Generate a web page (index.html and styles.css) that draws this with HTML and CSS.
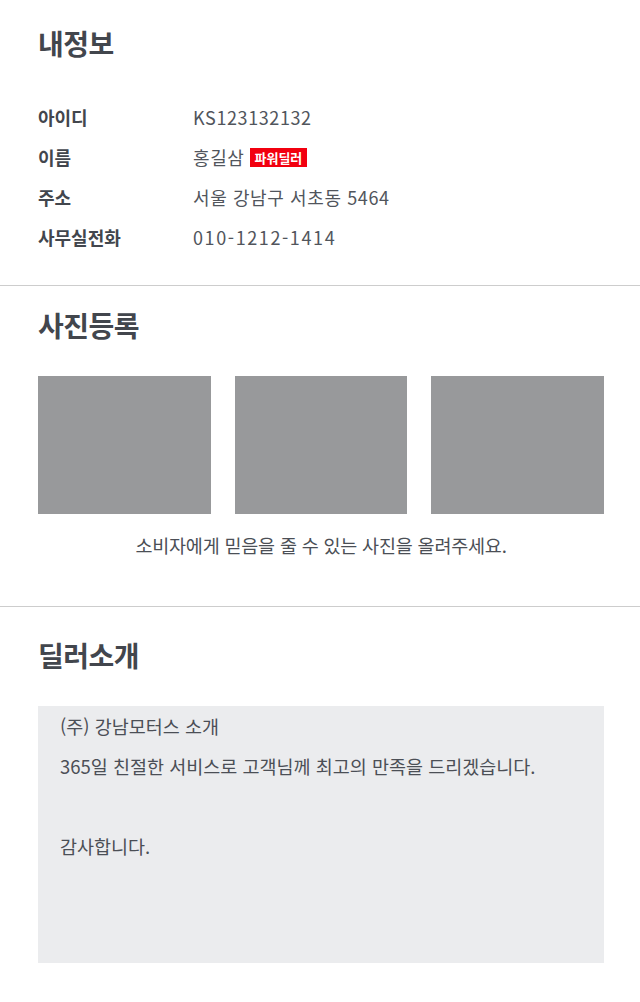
FILE: index.html
```html
<!DOCTYPE html>
<html lang="ko">
<head>
  <meta charset="UTF-8" />
  <meta name="viewport" content="width=device-width, initial-scale=1.0" />
  <title>내정보</title>
  <link rel="stylesheet" href="styles.css">
</head>
<body>
  <section class="section info">
    <h2 class="title">내정보</h2>
    <dl class="rows">
      <div class="row">
        <dt>아이디</dt>
        <dd>KS123132132</dd>
      </div>
      <div class="row">
        <dt>이름</dt>
        <dd>홍길삼 <span class="badge">파워딜러</span></dd>
      </div>
      <div class="row">
        <dt>주소</dt>
        <dd>서울 강남구 서초동 5464</dd>
      </div>
      <div class="row">
        <dt>사무실전화</dt>
        <dd class="phone">010-1212-1414</dd>
      </div>
    </dl>
  </section>

  <section class="section photos">
    <h2 class="title">사진등록</h2>
    <div class="photo-grid">
      <div class="photo"></div>
      <div class="photo"></div>
      <div class="photo"></div>
    </div>
    <p class="caption">소비자에게 믿음을 줄 수 있는 사진을 올려주세요.</p>
  </section>

  <section class="section dealer">
    <h2 class="title">딜러소개</h2>
    <div class="intro-box">(주) 강남모터스 소개
365일 친절한 서비스로 고객님께 최고의 만족을 드리겠습니다.

감사합니다.</div>
  </section>
</body>
</html>
```

FILE: styles.css
```css
body {
  margin: 0;
  background: #fff;
  color: #4b4f56;
  font-family: "Noto Sans CJK KR", "Noto Sans", sans-serif;
}

.section {
  padding: 0 36px 0 38px;
  border-bottom: 1px solid #cdcdcd;
}

.section:last-child {
  border-bottom: none;
}

.title {
  margin: 0;
  font-size: 28px;
  line-height: 38px;
  font-weight: bold;
  color: #42464d;
  letter-spacing: -0.5px;
}

/* 내정보 */
.info {
  padding-top: 24px;
  padding-bottom: 28px;
}

.rows {
  margin: 35px 0 0;
}

.row {
  display: flex;
  line-height: 40px;
  font-size: 18px;
}

.row dt {
  width: 155px;
  font-size: 18px;
  font-weight: bold;
  color: #42464d;
}

.row dd {
  margin: 0;
  color: #51555c;
  display: flex;
  align-items: center;
  gap: 6px;
  letter-spacing: 0.6px;
}

.row dd.phone {
  letter-spacing: 1.6px;
}

.badge {
  background: #f2000f;
  color: #fff;
  font-size: 13px;
  font-weight: bold;
  line-height: 19px;
  padding: 0 5px 0 4px;
  letter-spacing: 0;
}

/* 사진등록 */
.photos {
  padding-top: 20px;
  padding-bottom: 49px;
}

.photo-grid {
  margin-top: 32px;
  display: grid;
  grid-template-columns: repeat(3, 1fr);
  gap: 24px;
}

.photo {
  height: 138px;
  background: #98999b;
}

.caption {
  margin: 19px 0 0;
  text-align: center;
  font-size: 18.5px;
  line-height: 24px;
  color: #4b4f56;
  letter-spacing: -0.2px;
}

/* 딜러소개 */
.dealer {
  padding-top: 29px;
  padding-bottom: 39px;
}

.intro-box {
  margin-top: 32px;
  height: 257px;
  box-sizing: border-box;
  padding: 0 22px;
  background: #ebecee;
  white-space: pre-line;
  font-size: 18.5px;
  line-height: 40px;
  color: #4b4f56;
}
```
